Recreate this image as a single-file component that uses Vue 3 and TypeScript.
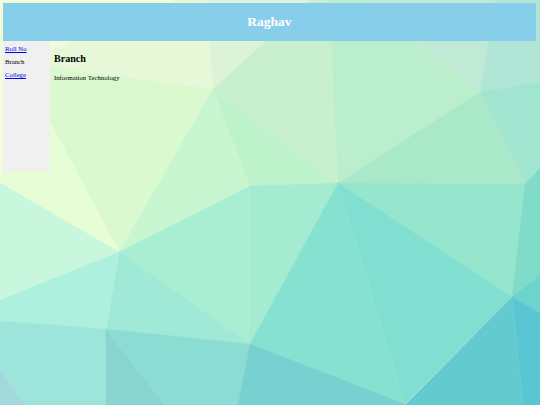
<script setup lang="ts">
interface Facet {
  points: string
  fill: string
}

const facets: Facet[] = [
  { points: '0,0 175,0 19,63 0,183', fill: '#f4fbdc' },
  { points: '175,0 207,0 213,89 19,63', fill: '#e7f8d8' },
  { points: '207,0 311,0 213,89', fill: '#dcf3d8' },
  { points: '311,0 329,0 338,183 213,89', fill: '#c8f0cf' },
  { points: '329,0 364,0 480,92 338,183', fill: '#bbeecc' },
  { points: '364,0 495,0 480,92', fill: '#c0e9d6' },
  { points: '495,0 540,0 540,82 480,92', fill: '#b1e5d6' },
  { points: '480,92 540,82 540,168 525,184', fill: '#a1e5d0' },
  { points: '338,183 480,92 525,184', fill: '#a9e8c9' },
  { points: '19,63 213,89 119,252', fill: '#daf9cf' },
  { points: '19,63 119,252 0,183', fill: '#e6fdd6' },
  { points: '213,89 250,186 119,252', fill: '#c8f6d0' },
  { points: '213,89 338,183 250,186', fill: '#bef2ca' },
  { points: '0,183 119,252 0,300', fill: '#c8f7dd' },
  { points: '119,252 250,186 250,344', fill: '#a9edd3' },
  { points: '250,186 338,183 250,344', fill: '#a5ebd1' },
  { points: '119,252 250,344 106,329', fill: '#9fe9d6' },
  { points: '0,300 119,252 106,329 0,321', fill: '#aef0de' },
  { points: '338,183 525,184 512,297', fill: '#96e5cd' },
  { points: '525,184 540,168 540,275 512,297', fill: '#80dcc9' },
  { points: '512,297 540,275 540,313', fill: '#6cd4cc' },
  { points: '512,297 540,313 540,405 523,405', fill: '#5ac6d4' },
  { points: '512,297 523,405 405,405', fill: '#63cbd0' },
  { points: '338,183 512,297 405,404', fill: '#80dfd0' },
  { points: '338,183 405,404 250,344', fill: '#86e1d1' },
  { points: '0,321 106,329 106,405 25,405 0,370', fill: '#9de5da' },
  { points: '0,370 25,405 0,405', fill: '#a3d8dc' },
  { points: '106,329 165,405 106,405', fill: '#8ad4d0' },
  { points: '106,329 250,344 238,405 165,405', fill: '#8bddd3' },
  { points: '250,344 405,404 405,405 238,405', fill: '#78d0d0' },
]
</script>

<template>
  <div class="page">
    <svg class="backdrop" viewBox="0 0 540 405" aria-hidden="true">
      <polygon
        v-for="facet in facets"
        :key="facet.points"
        :points="facet.points"
        :fill="facet.fill"
        :stroke="facet.fill"
        stroke-width="0.5"
      />
    </svg>

    <header class="banner">
      <h1 class="title">Raghav</h1>
    </header>

    <div class="body-row">
      <nav class="sidebar">
        <a class="item" href="#">Roll No</a>
        <span class="item">Branch</span>
        <a class="item" href="#">College</a>
      </nav>
      <main class="content">
        <h2 class="heading">Branch</h2>
        <p class="text">Information Technology</p>
      </main>
    </div>
  </div>
</template>

<style scoped>
.page {
  position: relative;
  width: 540px;
  height: 405px;
  box-sizing: border-box;
  padding: 3px 4px 0 3px;
  overflow: hidden;
  font-family: "Liberation Serif", "Times New Roman", serif;
  font-size: 6.75px;
  color: #000;
}

.backdrop {
  position: absolute;
  inset: 0;
  width: 540px;
  height: 405px;
  display: block;
}

.banner,
.body-row {
  position: relative;
}

.banner {
  height: 38px;
  display: flex;
  align-items: center;
  justify-content: center;
  background: #87ceeb;
}

.title {
  margin: 0;
  font-size: 13.5px;
  font-weight: bold;
  color: #fff;
  line-height: 38px;
}

.body-row {
  display: flex;
  align-items: flex-start;
}

.sidebar {
  width: 47px;
  height: 130px;
  box-sizing: border-box;
  padding-top: 4px;
  padding-left: 2px;
  display: flex;
  flex-direction: column;
  gap: 5px;
  background: #f0f0f0;
}

.item {
  line-height: 8px;
}

a.item {
  color: #0000ee;
  text-decoration: underline;
}

.content {
  padding: 12px 0 0 4px;
}

.heading {
  margin: 0;
  font-size: 10.1px;
  font-weight: bold;
  line-height: 12px;
}

.text {
  margin: 9px 0 0;
  line-height: 8px;
}
</style>
